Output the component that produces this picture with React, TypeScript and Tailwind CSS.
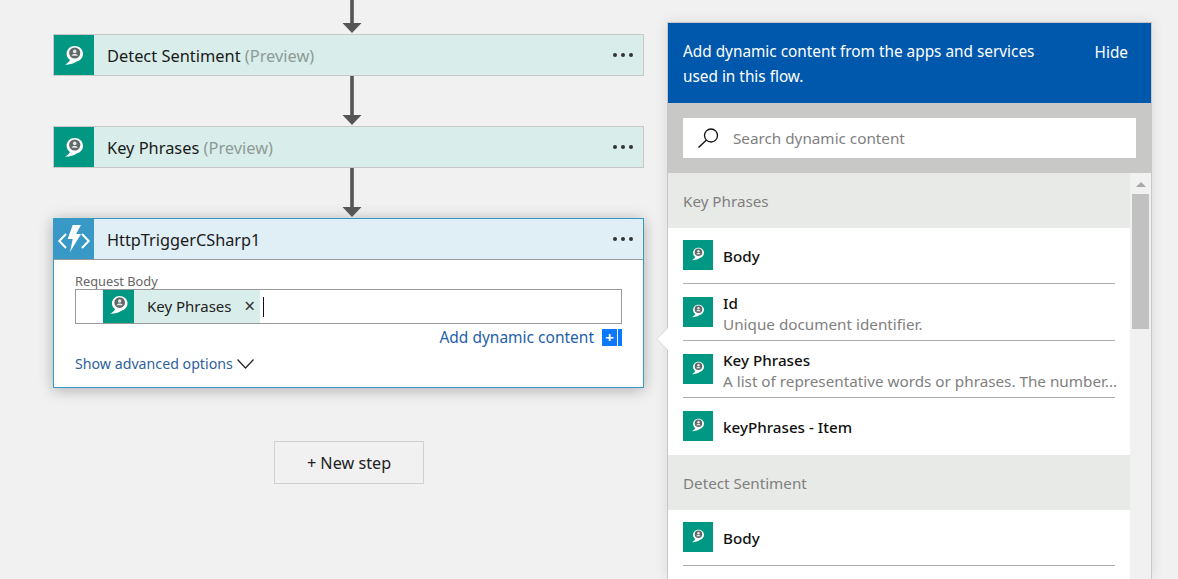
function SentimentIcon({ size = 40, viewBox = '0 0 40 40' }: { size?: number; viewBox?: string }) {
  return (
    <svg width={size} height={size} viewBox={viewBox} className="block shrink-0">
      <path d="M11 29.8 C16 29.6 20 28.8 22.5 26.6 C26.3 25.8 29 22.6 29 18.8 C29 14.3 25.3 11 20.7 11 C16.2 11 12.6 14.4 12.6 18.8 C12.6 21.4 13.9 23.7 16 25.1 C15 27 13 28.8 11 29.8 Z" fill="#fff" />
      <circle cx="20.7" cy="18" r="5.6" fill="#5f6a68" />
      <circle cx="20.7" cy="16.4" r="1.8" fill="#e8e8e8" />
      <path d="M17.6 20.8 C17.6 18.4 23.8 18.4 23.8 20.8 Z" fill="#e8e8e8" />
    </svg>
  );
}

function FunctionIcon() {
  return (
    <svg width="40" height="40" viewBox="0 0 40 40" className="block shrink-0">
      <path d="M12 15 L5.3 22 L12 29 M28 15 L34.7 22 L28 29" fill="none" stroke="#fff" strokeWidth="2" />
      <path d="M18.7 6 L27 6 L22 15 L27 15 L16 33 L18.7 20 L13.7 20 Z" fill="#fff" />
    </svg>
  );
}

function Dots() {
  return (
    <div className="flex gap-[4px] mr-[10px]">
      <span className="w-[4px] h-[4px] rounded-full bg-[#333]" />
      <span className="w-[4px] h-[4px] rounded-full bg-[#333]" />
      <span className="w-[4px] h-[4px] rounded-full bg-[#333]" />
    </div>
  );
}

function Arrow({ height }: { height: number }) {
  return (
    <svg width="20" height={height} viewBox={`0 0 20 ${height}`} className="block mx-auto translate-x-[3px]">
      <path d={`M8.2 0 H11.8 V${height - 10} H8.2 Z`} fill="#555" />
      <path d={`M0.5 ${height - 11} H19.5 L10 ${height - 1} Z`} fill="#555" />
    </svg>
  );
}

function StepCard({ title }: { title: string }) {
  return (
    <div className="h-[42px] flex items-center border border-[#c8c8c8] bg-[#d9eeea]">
      <div className="w-[40px] h-[40px] bg-[#009882]">
        <SentimentIcon />
      </div>
      <div className="flex-1 pl-[13px] pt-[2px] text-[16.4px] text-[#1a1a1a]">
        {title} <span className="text-[#8e9a98]">(Preview)</span>
      </div>
      <Dots />
    </div>
  );
}

function GroupHeader({ label }: { label: string }) {
  return (
    <div className="h-[55px] flex items-center pl-[15px] pt-[2px] bg-[#e8eae7] text-[15.2px] text-[#7f7f7f]">{label}</div>
  );
}

interface RowProps {
  title: string;
  detail?: string;
  first?: boolean;
  last?: boolean;
}

function ContentRow({ title, detail, first, last }: RowProps) {
  return (
    <div className={`mx-[15px] flex items-start gap-[10px] ${first ? 'h-[56px] pt-[12px]' : 'h-[57px] pt-[13px]'} ${last ? '' : 'border-b border-[#adadad]'}`}>
      <div className="w-[30px] h-[30px] bg-[#009882] shrink-0">
        <SentimentIcon size={30} viewBox="-2.5 -0.5 45 45" />
      </div>
      <div className="min-w-0 flex-1">
        {detail ? (
          <>
            <div className="text-[15.2px] leading-[20px] font-medium text-[#111] -mt-[4px]">{title}</div>
            <div className="text-[15.25px] leading-[23px] text-[#7f7f7f] whitespace-nowrap">{detail}</div>
          </>
        ) : (
          <div className="text-[15.2px] leading-[32px] font-medium text-[#111]">{title}</div>
        )}
      </div>
    </div>
  );
}

export default function App() {
  return (
    <div className="w-[1178px] h-[579px] overflow-hidden bg-[#f1f1f1] flex items-start font-['Noto_Sans',sans-serif]">
      <div className="w-[591px] ml-[53px] shrink-0">
        <Arrow height={34} />
        <StepCard title="Detect Sentiment" />
        <Arrow height={50} />
        <StepCard title="Key Phrases" />
        <Arrow height={50} />

        <div className="h-[170px] border border-[#3999c6] bg-white shadow-[0_2px_14px_rgba(0,0,0,0.28)]">
          <div className="h-[41px] flex items-center bg-[#e0eef6] border-b border-[#999]">
            <div className="w-[40px] h-[40px] bg-[#3999c6]">
              <FunctionIcon />
            </div>
            <div className="flex-1 pl-[13px] pt-[2px] text-[16.3px] text-[#1a1a1a]">HttpTriggerCSharp1</div>
            <Dots />
          </div>
          <div className="pl-[21px] pr-[21px]">
            <div className="text-[12.8px] leading-[14px] text-[#666] mt-[14px]">Request Body</div>
            <div className="h-[35px] mt-px border border-[#999] flex items-stretch pl-[27px]">
              <div className="w-[31px] bg-[#009882] flex items-center justify-center">
                <SentimentIcon size={31} viewBox="3.2 5.8 32.6 32.6" />
              </div>
              <div className="w-[126px] bg-[#d9eeea] flex items-center pl-[13px] text-[15px] text-[#222]">
                <span className="flex-1">Key Phrases</span>
                <span className="mr-[5px] text-[19px] leading-none text-[#333]">×</span>
              </div>
              <div className="w-px h-[20px] bg-[#111] self-center ml-[3px]" />
            </div>
            <div className="flex items-center justify-end gap-[8px] mt-[5px] h-[18px]">
              <span className="text-[15.5px] text-[#1f5fa8]">Add dynamic content</span>
              <div className="flex h-[17px] -translate-y-px">
                <div className="w-[15px] bg-[#0a78ff] text-white text-[15px] leading-[17px] text-center font-bold">+</div>
                <div className="w-[4px] ml-px bg-[#0a78ff]" />
              </div>
            </div>
            <div className="flex items-center gap-[4px] mt-[6px] text-[14.2px] text-[#2f5f9e]">
              Show advanced options
              <svg width="17" height="10" viewBox="0 0 17 10" className="block">
                <path d="M0.5 0.5 L8.5 9 L16.5 0.5" fill="none" stroke="#222" strokeWidth="1.2" />
              </svg>
            </div>
          </div>
        </div>

        <div className="w-[150px] h-[43px] mx-auto mt-[53px] border border-[#d0d0d0] flex items-center justify-center pt-[2px] pl-px text-[16.2px] text-[#222]">
          + New step
        </div>
      </div>

      <div className="relative w-[485px] h-[557px] ml-[23px] mt-[22px] shrink-0 border-x border-t border-[#c8c8c8] shadow-[0_0_12px_rgba(0,0,0,0.1)] bg-white">
        <div className="absolute -left-[9px] top-[308px] w-[16px] h-[16px] rotate-45 bg-white border-l border-b border-[#dcdcdc]" />
        <div className="relative h-[80px] bg-[#0058ad] flex items-start justify-between pl-[15px] pr-[23px] pt-[16px] text-[15.35px] leading-[25px] text-white">
          <div className="w-[380px]">Add dynamic content from the apps and services used in this flow.</div>
          <div className="pt-px">Hide</div>
        </div>
        <div className="relative h-[70px] bg-[#c8c9c6] px-[15px] py-[15px]">
          <div className="h-[40px] bg-white flex items-center pl-[14px] gap-[12px]">
            <svg width="24" height="24" viewBox="0 0 24 24" className="block">
              <circle cx="14" cy="9.5" r="6.5" fill="none" stroke="#111" strokeWidth="1.3" />
              <path d="M9.5 14 L1.5 21.5" stroke="#111" strokeWidth="1.4" />
            </svg>
            <span className="text-[15.25px] text-[#7f7f7f]">Search dynamic content</span>
          </div>
        </div>
        <div className="relative flex h-[407px]">
          <div className="flex-1 min-w-0 bg-white">
            <GroupHeader label="Key Phrases" />
            <ContentRow title="Body" first />
            <ContentRow title="Id" detail="Unique document identifier." />
            <ContentRow title="Key Phrases" detail="A list of representative words or phrases. The number..." />
            <ContentRow title="keyPhrases - Item" last />
            <GroupHeader label="Detect Sentiment" />
            <ContentRow title="Body" first />
          </div>
          <div className="w-[21px] bg-[#f1f1f1] shrink-0 flex flex-col items-center">
            <div className="mt-[9px] w-0 h-0 border-x-[5px] border-x-transparent border-b-[5px] border-b-[#a8a8a8]" />
            <div className="mt-[7px] w-[17px] h-[135px] bg-[#c1c1c1]" />
          </div>
        </div>
      </div>
    </div>
  );
}
